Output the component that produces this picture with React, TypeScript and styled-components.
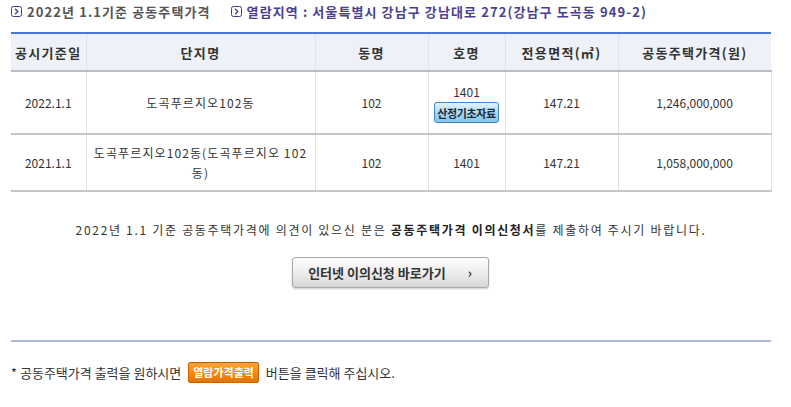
import styled, { createGlobalStyle } from 'styled-components';

const GlobalStyle = createGlobalStyle`
  body {
    margin: 0;
    background: #fff;
    color: #333;
    font-family: 'Noto Sans CJK KR', 'Noto Sans', sans-serif;
    font-size: 12px;
  }
`;

interface PriceRow {
  date: string;
  complex: string;
  dong: string;
  ho: string;
  area: string;
  price: string;
  basis?: boolean;
}

const rows: PriceRow[] = [
  {
    date: '2022.1.1',
    complex: '도곡푸르지오102동',
    dong: '102',
    ho: '1401',
    area: '147.21',
    price: '1,246,000,000',
    basis: true,
  },
  {
    date: '2021.1.1',
    complex: '도곡푸르지오102동(도곡푸르지오 102동)',
    dong: '102',
    ho: '1401',
    area: '147.21',
    price: '1,058,000,000',
  },
];

const columns = [
  { title: '공시기준일', width: 75 },
  { title: '단지명', width: 229 },
  { title: '동명', width: 113 },
  { title: '호명', width: 77 },
  { title: '전용면적(㎡)', width: 113 },
  { title: '공동주택가격(원)', width: 153 },
];

const ArrowIcon = () => (
  <Icon viewBox="0 0 11 11">
    <rect x="0.5" y="0.5" width="10" height="10" rx="2" fill="none" stroke="#3b3b8e" />
    <path d="M4 2.8 L6.8 5.5 L4 8.2" fill="none" stroke="#3b3b8e" strokeWidth="1.2" />
  </Icon>
);

const App = (): JSX.Element => {
  return (
    <Page>
      <GlobalStyle />
      <TitleBar>
        <TitleItem>
          <ArrowIcon />
          <TitleText>2022년 1.1기준 공동주택가격</TitleText>
        </TitleItem>
        <TitleItem>
          <ArrowIcon />
          <TitleText $accent>열람지역 : 서울특별시 강남구 강남대로 272(강남구 도곡동 949-2)</TitleText>
        </TitleItem>
      </TitleBar>

      <Table>
        <colgroup>
          {columns.map((c) => (
            <col key={c.title} style={{ width: c.width }} />
          ))}
        </colgroup>
        <thead>
          <tr>
            {columns.map((c) => (
              <Th key={c.title}>{c.title}</Th>
            ))}
          </tr>
        </thead>
        <tbody>
          {rows.map((r) => (
            <Tr key={r.date} $tall={!!r.basis}>
              <Td>{r.date}</Td>
              <Td>
                <Name>{r.complex}</Name>
              </Td>
              <Td>{r.dong}</Td>
              <Td>
                <HoCell>
                  {r.ho}
                  {r.basis && <BasisButton>산정기초자료</BasisButton>}
                </HoCell>
              </Td>
              <Td>{r.area}</Td>
              <Td>{r.price}</Td>
            </Tr>
          ))}
        </tbody>
      </Table>

      <Notice>
        2022년 1.1 기준 공동주택가격에 의견이 있으신 분은 <strong>공동주택가격 이의신청서</strong>를 제출하여 주시기 바랍니다.
      </Notice>

      <ButtonRow>
        <ObjectionButton>
          인터넷 이의신청 바로가기
          <Chevron>›</Chevron>
        </ObjectionButton>
      </ButtonRow>

      <Divider />

      <Footer>
        * 공동주택가격 출력을 원하시면 <PrintButton>열람가격출력</PrintButton> 버튼을 클릭해 주십시오.
      </Footer>
    </Page>
  );
};

export default App;

const Page = styled.div`
  width: 760px;
  padding: 0 0 0 11px;
`;

const TitleBar = styled.div`
  align-items: center;
  display: flex;
  gap: 20px;
  height: 23px;
  margin-bottom: 9px;
`;

const TitleItem = styled.div`
  align-items: center;
  display: flex;
  gap: 5px;
`;

const Icon = styled.svg`
  display: block;
  height: 11px;
  width: 11px;
`;

const TitleText = styled.span<{ $accent?: boolean }>`
  color: ${(p) => (p.$accent ? '#4a3f90' : '#555')};
  font-size: 13px;
  font-weight: bold;
  letter-spacing: 1.1px;
`;

const Table = styled.table`
  border-collapse: collapse;
  border-top: 2px solid #4a74d6;
  table-layout: fixed;
  width: 760px;
`;

const Th = styled.th`
  background: #eef2f8;
  border-bottom: 2px solid #b9bcc2;
  border-left: 1px solid #dde3eb;
  color: #333;
  font-size: 13px;
  font-weight: bold;
  height: 36px;
  letter-spacing: 1.3px;
  padding: 0;
  text-align: center;

  &:first-child {
    border-left: none;
  }
`;

const Tr = styled.tr<{ $tall: boolean }>`
  height: ${(p) => (p.$tall ? '63px' : '57px')};
`;

const Td = styled.td`
  border-bottom: 2px solid #c4c6ca;
  border-left: 1px solid #dde3eb;
  color: #333;
  font-size: 12px;
  line-height: 20px;
  padding: 0 6px;
  text-align: center;

  &:first-child {
    border-left: none;
  }

  &:last-child {
    border-right: 1px solid #dde3eb;
  }
`;

const Name = styled.span`
  letter-spacing: 1.1px;
`;

const HoCell = styled.div`
  align-items: center;
  display: flex;
  flex-direction: column;
`;

const BasisButton = styled.button`
  background: linear-gradient(#e4f4fd, #a6d7f1 55%, #86c6ea);
  border: 1px solid #3e87c2;
  border-radius: 3px;
  color: #1f2a36;
  font-family: inherit;
  font-size: 11px;
  font-weight: bold;
  height: 21px;
  letter-spacing: -0.4px;
  padding: 0 2px;
  white-space: nowrap;
  width: 65px;
`;

const Notice = styled.p`
  color: #333;
  font-size: 12px;
  letter-spacing: 1.7px;
  margin: 29px 0 0;
  text-align: center;

  strong {
    color: #222;
  }
`;

const ButtonRow = styled.div`
  display: flex;
  justify-content: center;
  margin-top: 19px;
  padding-right: 2px;
`;

const ObjectionButton = styled.button`
  align-items: center;
  background: linear-gradient(#fdfdfd, #eeeeee 50%, #d6d6d6);
  border: 1px solid #a9a9a9;
  border-radius: 3px;
  box-shadow: 0 1px 2px rgba(0, 0, 0, 0.2);
  color: #333;
  display: flex;
  font-family: inherit;
  font-size: 13px;
  font-weight: bold;
  height: 31px;
  justify-content: center;
  width: 197px;
`;

const Chevron = styled.span`
  font-size: 13px;
  margin-left: 22px;
`;

const Divider = styled.hr`
  border: none;
  border-top: 2px solid #a9b7d8;
  margin: 52px 0 0;
`;

const Footer = styled.p`
  align-items: center;
  color: #333;
  display: flex;
  font-size: 13px;
  gap: 4px;
  margin: 20px 0 0;
  white-space: pre;
`;

const PrintButton = styled.span`
  background: linear-gradient(#ffa43a, #f58a10 50%, #e57300);
  border: 1px solid #c85f00;
  border-radius: 2px;
  color: #fff;
  display: inline-block;
  font-size: 11px;
  font-weight: bold;
  height: 19px;
  line-height: 19px;
  padding: 0 4px;
`;
